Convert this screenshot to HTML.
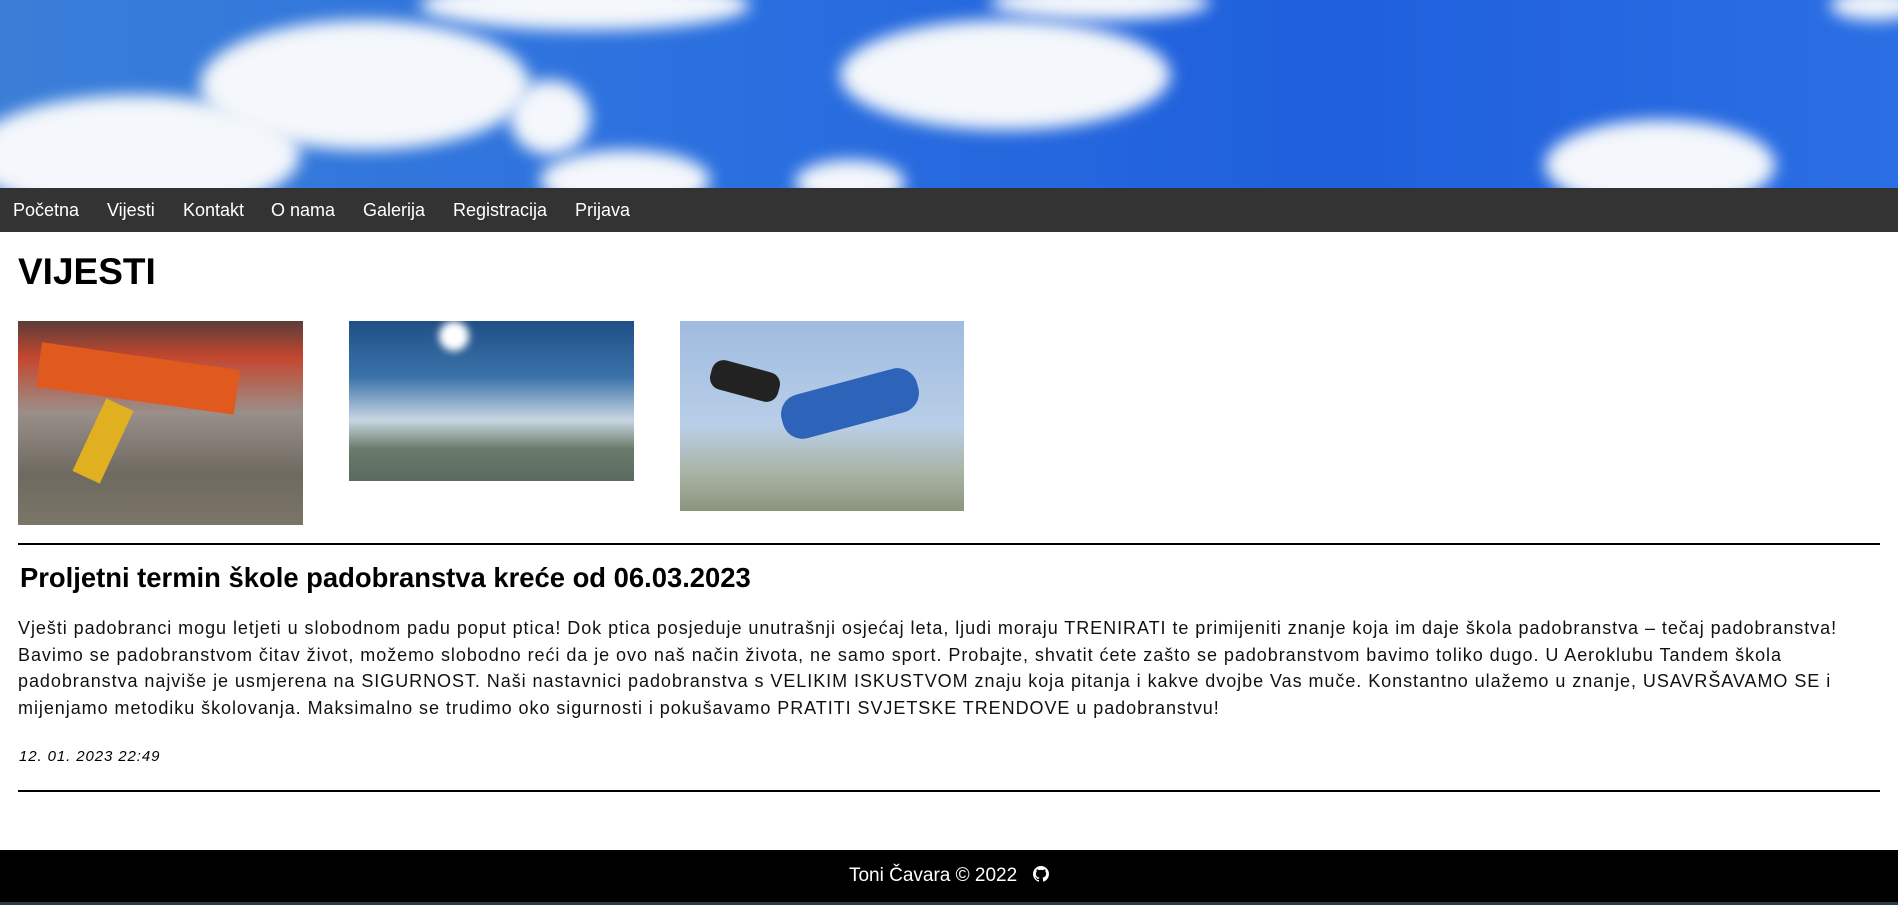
<!DOCTYPE html>
<html><head><meta charset="utf-8"><style>
*{margin:0;padding:0;box-sizing:border-box}
body{width:1898px;height:905px;overflow:hidden;font-family:"Liberation Sans",Arial,sans-serif;background:#fff;position:relative}
.hdr{position:absolute;left:0;top:0;width:1898px;height:188px;background:linear-gradient(90deg,#3a7ed8 0%,#2a6fe0 40%,#1f5fdc 70%,#2b6fe4 100%);overflow:hidden}
.c{position:absolute;background:#f4f7fb;border-radius:50%;filter:blur(8px)}
nav{position:absolute;top:188px;left:0;width:1898px;height:44px;background:#333}
nav a{position:absolute;top:12px;color:#fff;font-size:18px;text-decoration:none}
h1{position:absolute;left:18px;top:250px;font-size:37px;font-weight:bold;line-height:44px}
.im{position:absolute}
.hr{position:absolute;left:18px;width:1862px;height:2px;background:#000}
h2{position:absolute;left:20px;top:561px;font-size:27.4px;font-weight:bold;line-height:34px}
p{position:absolute;left:18px;top:615px;width:1866px;font-size:18px;line-height:26.6px;letter-spacing:0.95px;color:#111}
.dt{position:absolute;left:19px;top:748px;font-size:15px;font-style:italic;letter-spacing:0.9px}
footer{position:absolute;left:0;top:850px;width:1898px;height:52px;background:#000;color:#fff;font-size:19px;text-align:center;line-height:52px}
.bot{position:absolute;left:0;top:902px;width:1898px;height:3px;background:#283d48}
</style></head><body>
<div class="hdr">
<div class="c" style="left:-30px;top:95px;width:330px;height:120px"></div>
<div class="c" style="left:200px;top:20px;width:330px;height:130px"></div>
<div class="c" style="left:510px;top:80px;width:80px;height:75px"></div>
<div class="c" style="left:540px;top:150px;width:170px;height:60px"></div>
<div class="c" style="left:420px;top:-20px;width:330px;height:50px"></div>
<div class="c" style="left:840px;top:20px;width:330px;height:110px"></div>
<div class="c" style="left:990px;top:-15px;width:220px;height:35px"></div>
<div class="c" style="left:795px;top:160px;width:110px;height:45px"></div>
<div class="c" style="left:1545px;top:120px;width:230px;height:90px"></div>
<div class="c" style="left:1830px;top:-10px;width:90px;height:30px"></div>
</div>
<nav>
<a style="left:13px">Početna</a><a style="left:107px">Vijesti</a><a style="left:183px">Kontakt</a><a style="left:271px">O nama</a><a style="left:363px">Galerija</a><a style="left:453px">Registracija</a><a style="left:575px">Prijava</a>
</nav>
<h1>VIJESTI</h1>
<div class="im" style="left:18px;top:321px;width:285px;height:204px;background:linear-gradient(180deg,#5b3d3a 0%,#c4472f 18%,#9a8f8a 45%,#6e6a60 75%,#7c7568 100%)"><div style="position:absolute;left:20px;top:35px;width:200px;height:45px;background:#e05a20;transform:rotate(8deg)"></div><div style="position:absolute;left:70px;top:80px;width:30px;height:80px;background:#e0b020;transform:rotate(25deg)"></div></div>
<div class="im" style="left:349px;top:321px;width:285px;height:160px;background:linear-gradient(180deg,#1f4f86 0%,#3b72aa 35%,#c8d6e2 62%,#6a7b6a 80%,#5a6a60 100%)"><div style="position:absolute;left:90px;top:0;width:30px;height:30px;border-radius:50%;background:#fff;filter:blur(4px)"></div></div>
<div class="im" style="left:680px;top:321px;width:284px;height:190px;background:linear-gradient(180deg,#9fbbe0 0%,#b9cfe8 55%,#a8b3a4 80%,#8c957e 100%)"><div style="position:absolute;left:100px;top:60px;width:140px;height:45px;background:#2d63b8;border-radius:20px;transform:rotate(-15deg)"></div><div style="position:absolute;left:30px;top:45px;width:70px;height:30px;background:#222;border-radius:12px;transform:rotate(15deg)"></div></div>
<div class="hr" style="top:543px"></div>
<h2>Proljetni termin škole padobranstva kreće od 06.03.2023</h2>
<p>Vješti padobranci mogu letjeti u slobodnom padu poput ptica! Dok ptica posjeduje unutrašnji osjećaj leta, ljudi moraju TRENIRATI te primijeniti znanje koja im daje škola padobranstva – tečaj padobranstva! Bavimo se padobranstvom čitav život, možemo slobodno reći da je ovo naš način života, ne samo sport. Probajte, shvatit ćete zašto se padobranstvom bavimo toliko dugo. U Aeroklubu Tandem škola padobranstva najviše je usmjerena na SIGURNOST. Naši nastavnici padobranstva s VELIKIM ISKUSTVOM znaju koja pitanja i kakve dvojbe Vas muče. Konstantno ulažemo u znanje, USAVRŠAVAMO SE i mijenjamo metodiku školovanja. Maksimalno se trudimo oko sigurnosti i pokušavamo PRATITI SVJETSKE TRENDOVE u padobranstvu!</p>
<div class="dt">12. 01. 2023 22:49</div>
<div class="hr" style="top:790px"></div>
<footer>Toni Čavara © 2022 &nbsp;&nbsp;<svg width="16" height="16" viewBox="0 0 16 16" style="vertical-align:-1px"><path fill="#fff" d="M8 0C3.58 0 0 3.58 0 8c0 3.54 2.29 6.53 5.47 7.59.4.07.55-.17.55-.38v-1.33c-2.23.48-2.7-1.07-2.7-1.07-.36-.92-.89-1.17-.89-1.17-.73-.5.06-.49.06-.49.8.06 1.23.83 1.23.83.71 1.23 1.87.87 2.33.66.07-.52.28-.87.5-1.07-1.78-.2-3.64-.89-3.64-3.95 0-.87.31-1.59.82-2.15-.08-.2-.36-1.02.08-2.12 0 0 .67-.21 2.2.82a7.6 7.6 0 0 1 4 0c1.53-1.04 2.2-.82 2.2-.82.44 1.1.16 1.92.08 2.12.51.56.82 1.27.82 2.15 0 3.07-1.87 3.75-3.65 3.95.29.25.54.73.54 1.48v2.2c0 .21.15.46.55.38A8 8 0 0 0 16 8c0-4.42-3.58-8-8-8z"/></svg></footer>
<div class="bot"></div>
</body></html>
